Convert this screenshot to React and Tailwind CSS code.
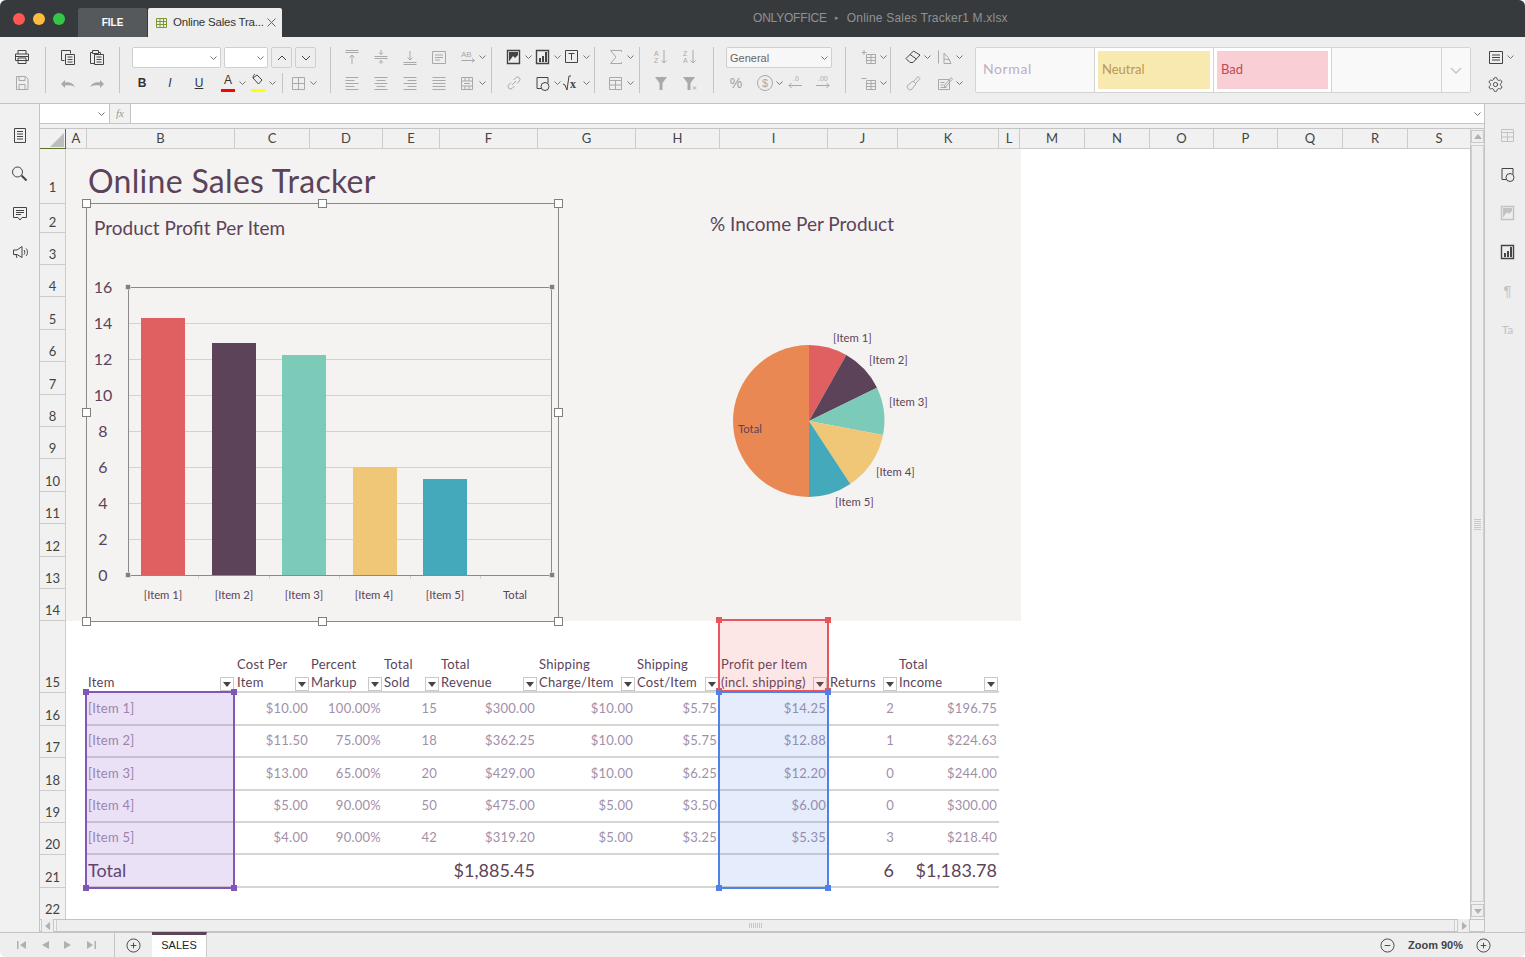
import React from 'react';
import { Settings } from 'lucide-react';
import clsx from 'clsx';

const PLUM = '#5c4359';

// toolbar icon outlines, 20x20
const ICONS = {
  print: 'M6 7V3.5h8V7M3.5 7h13v6.5h-13zM6 11h8v5.5H6zM3.5 9.5h13',
  save: 'M4.5 3.5h9l2.5 2.5v10.5h-11.5zM7 3.5v4h6v-4M7 16.5v-5h6v5',
  copy: 'M3.5 3.5h9v3M3.5 3.5v10h3M7.5 7.5h9v10h-9zM9.5 10h5M9.5 12.5h5M9.5 15h5',
  paste: 'M5 5.5H3.5v11h4M5.5 3.5h6v3h-6zM12 5.5h1.5v2M7.5 7.5h9v10h-9zM9.5 10h5M9.5 12.5h5M9.5 15h5',
  borders: 'M3.5 4.5h12v12h-12zM9.5 4.5v12M3.5 10.5h12',
  alignTop: 'M3.5 3.5h13M3.5 5.5h13M10 17V8M7.5 10.5L10 8l2.5 2.5',
  alignMid: 'M3.5 9.5h13M3.5 11.5h13M10 3v4.5M8 5.5l2 2 2-2M10 17v-3.5M8 15.5l2-2 2 2',
  alignBottom: 'M3.5 15.5h13M3.5 17.5h13M10 4v9M7.5 10.5L10 13l2.5-2.5',
  wrap: 'M3.5 4.5h13v12h-13zM6 8h8M6 10.5h8M6 13h5',
  left: 'M3.5 4.5h13M3.5 7.5h9M3.5 10.5h13M3.5 13.5h9M3.5 16.5h13',
  center: 'M3.5 4.5h13M5.5 7.5h9M3.5 10.5h13M5.5 13.5h9M3.5 16.5h13',
  right: 'M3.5 4.5h13M7.5 7.5h9M3.5 10.5h13M7.5 13.5h9M3.5 16.5h13',
  justify: 'M3.5 4.5h13M3.5 7.5h13M3.5 10.5h13M3.5 13.5h13M3.5 16.5h13',
  merge: 'M3.5 4.5h11v12h-11zM3.5 8h11M3.5 13h11M7 4.5V8M11 4.5V8M7 13v3.5M11 13v3.5M6 10.5h6',
  chart: 'M3.5 3.5h12v13h-12z',
  textBox: 'M3.5 3.5h12v12h-12zM6.5 6.5h6M9.5 6.5v6.5',
  link: 'M8 12l4-4M7 9.5l-2.5 2.5a2.5 2.5 0 003.5 3.5l2.5-2.5M13 10.5l2.5-2.5a2.5 2.5 0 00-3.5-3.5L9.5 7',
  shape: 'M8 15.5H4V4.5h11v5.5',
  sigma: 'M15.5 5V3.5h-11l5.5 6.5-5.5 6.5h11V15',
  table: 'M3.5 4.5h12v12h-12zM3.5 7.5h12M3.5 12h12M9.5 7.5v9',
  insert: 'M7.5 7.5h9v9h-9zM7.5 10.5h9M7.5 13.5h9M12 7.5v9M5 3v5M2.5 5.5h5',
  remove: 'M7.5 7.5h9v9h-9zM7.5 10.5h9M7.5 13.5h9M12 7.5v9M2.5 5.5h5',
  eraser: 'M3 11.5l7.5-7.5 6.5 4-7 7.5H7zM7 7.5l6.5 4.5',
  slices: 'M3.5 3.5v13M9 16.5V6l4 4.5 3 6zM9 12l6 1',
  brush: 'M4 13l6-5 3 3-5 6c-2 .5-4-2-4-4zM11 8l4-4.5 2 2-4 4.5',
  edit: 'M3.5 6.5h11v10h-11zM5.5 9.5h4M5.5 12h3M5.5 14.5h6M9 13l7-8.5 1.5 1.5-7 8z',
  list: 'M3.5 4.5h13v12h-13zM6 8h8M6 10.5h8M6 13h8',
  doc: 'M4.5 3.5h11v14h-11zM7 6.5h6M7 9h6M7 11.5h6M7 14h6',
  search: 'M12.5 8a5 5 0 11-10 0 5 5 0 0110 0z',
  comment: 'M3.5 4.5h13v10h-4.5L10 17l-2-2.5H3.5zM6 7.5h8M6 9.5h8M6 11.5h5',
  speaker: 'M3.5 8h3.5l5-3.5v11L7 12.5H3.5zM6 12.5l1 3.5M14 8c1 1 1 3.5 0 4.5M16 6.5c2 2 2 5.5 0 7.5',
};

function Ico({ name, className, sw = 1, children }) {
  return (
    <svg viewBox="0 0 20 20" width="20" height="20" fill="none" stroke="currentColor" strokeWidth={sw} className={clsx('shrink-0', className)}>
      {name && <path d={ICONS[name]} />}
      {children}
    </svg>
  );
}

function Chev({ className }) {
  return (
    <svg viewBox="0 0 7 4" width="7" height="4" fill="none" stroke="#777" strokeWidth="1" className={clsx('shrink-0', className)}>
      <path d="M.5.5L3.5 3.5 6.5.5" />
    </svg>
  );
}

// one toolbar slot: 20px icon plus an optional drop caret
function Tool({ name, off, chev, className, children }) {
  return (
    <span className={clsx('flex h-5 items-center', chev !== undefined && 'w-[28px]', off ? 'text-[#a9a9a9]' : 'text-[#444]', className)}>
      {children || <Ico name={name} />}
      {chev && <Chev className="ml-px" />}
    </span>
  );
}

function Combo({ className, label }) {
  return (
    <div className={clsx('flex h-[21px] items-center justify-between rounded-[2px] border border-[#cfcfcf] px-[3px] text-[11px] text-[#666]', className)}>
      <span className="pt-px">{label}</span>
      <Chev />
    </div>
  );
}

function ArrowBtn({ d }) {
  return (
    <div className="flex h-[21px] w-[21px] items-center justify-center rounded-[2px] border border-[#cfcfcf]">
      <svg viewBox="0 0 10 6" width="10" height="6" fill="none" stroke="#444" strokeWidth="1"><path d={d} /></svg>
    </div>
  );
}

function Group({ className, top, bottom }) {
  return (
    <div className={clsx('flex h-[46px] shrink-0 flex-col justify-between', className)}>
      {top}
      {bottom}
    </div>
  );
}

function Row({ className, children }) {
  return <div className={clsx('flex items-center', className)}>{children}</div>;
}

function Toolbar() {
  const small = { fontFamily: 'Liberation Sans', stroke: 'none', fill: 'currentColor' };
  return (
    <div className="flex h-[67px] shrink-0 border-b border-[#c4c4c4] bg-[#eeeeee] pt-[10px]">
      <Group
        className="w-[46px] border-r border-[#c4c4c4]"
        top={<Row className="pl-[12px]"><Tool name="print" /></Row>}
        bottom={<Row className="pl-[12px]"><Tool name="save" off /></Row>}
      />
      <Group
        className="w-[74px] border-r border-[#c4c4c4]"
        top={<Row className="gap-[9px] pl-[12px]"><Tool name="copy" /><Tool name="paste" /></Row>}
        bottom={
          <Row className="gap-[9px] pl-[12px]">
            <Tool off><Ico sw={0}><path fill="currentColor" d="M3 11l4-4v2.5c4.5-1 8 .5 10 4.5-2.5-1.5-5.5-2-10-1.5V15z" /></Ico></Tool>
            <Tool off><Ico sw={0}><path fill="currentColor" d="M17 11l-4-4v2.5c-4.5-1-8 .5-10 4.5 2.5-1.5 5.5-2 10-1.5V15z" /></Ico></Tool>
          </Row>
        }
      />
      <Group
        className="w-[211px] border-r border-[#c4c4c4]"
        top={
          <Row className="gap-[3px] pl-[12px]">
            <Combo className="w-[89px] justify-end bg-white" />
            <Combo className="w-[44px] justify-end bg-white" />
            <ArrowBtn d="M1 5l4-4 4 4" />
            <ArrowBtn d="M1 1l4 4 4-4" />
          </Row>
        }
        bottom={
          <Row className="pl-[12px] text-[12px] text-[#333]">
            <span className="w-5 text-center font-bold">B</span>
            <span className="ml-[8px] w-5 text-center italic">I</span>
            <span className="ml-[9px] w-5 text-center underline">U</span>
            <Tool chev className="ml-[9px]">
              <span className="flex h-5 w-5 flex-col items-center text-[12px] leading-[15px] text-[#333]">
                A<span className="mt-[1px] h-[3px] w-[14px] bg-[#ff0000]" />
              </span>
            </Tool>
            <Tool chev className="ml-[2px]">
              <span className="flex h-5 w-5 flex-col items-center">
                <svg viewBox="0 0 14 14" width="14" height="14" fill="none" stroke="#444"><path d="M2 5l4-3 5 5-3.5 4zM2 5c0-2 1-3.5 2-4" /></svg>
                <span className="mt-[2px] h-[3px] w-[14px] bg-[#ffff00]" />
              </span>
            </Tool>
            <span className="ml-[6px] h-5 border-l border-[#c4c4c4]" />
            <Tool name="borders" off chev className="ml-[6px]" />
          </Row>
        }
      />
      <Group
        className="w-[161px] border-r border-[#c4c4c4]"
        top={
          <Row className="gap-[9px] pl-[11px]">
            <Tool name="alignTop" off />
            <Tool name="alignMid" off />
            <Tool name="alignBottom" off />
            <Tool name="wrap" off />
            <Tool off chev>
              <Ico>
                <text x="3" y="10" fontSize="8" style={small}>AB</text>
                <path d="M3.5 13.5h13M14 11.5l2.5 2-2.5 2" />
              </Ico>
            </Tool>
          </Row>
        }
        bottom={
          <Row className="gap-[9px] pl-[11px]">
            <Tool name="left" off />
            <Tool name="center" off />
            <Tool name="right" off />
            <Tool name="justify" off />
            <Tool name="merge" off chev />
          </Row>
        }
      />
      <Group
        className="w-[103px] border-r border-[#c4c4c4]"
        top={
          <Row className="gap-px pl-[12px]">
            <Tool chev>
              <Ico name="chart" sw={1.4}><path fill="currentColor" stroke="none" d="M5 14.5V5h9v3l-3 3-2-2z" /></Ico>
            </Tool>
            <Tool chev>
              <Ico name="chart" sw={1.4}><path fill="currentColor" stroke="none" d="M6 11h2v4H6zM9 9h2v6H9zM12 5h2v10h-2z" /></Ico>
            </Tool>
            <Tool name="textBox" chev />
          </Row>
        }
        bottom={
          <Row className="gap-px pl-[12px]">
            <Tool name="link" off chev={false} />
            <Tool chev>
              <Ico name="shape"><circle cx="12" cy="13.5" r="4" /></Ico>
            </Tool>
            <Tool chev>
              <Ico>
                <path d="M1 11l2 1 2 5 2-14h2" />
                <text x="8" y="15" fontSize="12" fontWeight="bold" style={{ ...small, fontFamily: 'Liberation Serif' }}>x</text>
              </Ico>
            </Tool>
          </Row>
        }
      />
      <Group
        className="w-[45px] border-r border-[#c4c4c4]"
        top={<Row className="pl-[11px]"><Tool name="sigma" off chev /></Row>}
        bottom={<Row className="pl-[11px]"><Tool name="table" off chev /></Row>}
      />
      <Group
        className="w-[74px] border-r border-[#c4c4c4]"
        top={
          <Row className="gap-[9px] pl-[11px]">
            <Tool off>
              <Ico>
                <text x="3" y="9" fontSize="7" style={small}>A</text>
                <text x="3" y="16" fontSize="7" style={small}>Z</text>
                <path d="M13 3v13M10.5 13.5L13 16l2.5-2.5" />
              </Ico>
            </Tool>
            <Tool off>
              <Ico>
                <text x="3" y="9" fontSize="7" style={small}>Z</text>
                <text x="3" y="16" fontSize="7" style={small}>A</text>
                <path d="M13 3v13M10.5 13.5L13 16l2.5-2.5" />
              </Ico>
            </Tool>
          </Row>
        }
        bottom={
          <Row className="gap-[9px] pl-[11px]">
            <Tool off><Ico sw={0}><path fill="currentColor" d="M4 4h12l-4.5 6v7h-3v-7z" /></Ico></Tool>
            <Tool off>
              <Ico sw={0}>
                <path fill="currentColor" d="M3 4h12l-4.5 6v7h-3v-7z" />
                <path stroke="currentColor" strokeWidth="1" d="M13 13.5l3 3M16 13.5l-3 3" />
              </Ico>
            </Tool>
          </Row>
        }
      />
      <Group
        className="w-[132px] border-r border-[#c4c4c4]"
        top={<Row className="pl-[12px]"><Combo className="w-[106px] bg-[#f7f7f7]" label="General" /></Row>}
        bottom={
          <Row className="pl-[12px] text-[#a0a0a0]">
            <span className="w-5 text-center text-[14px] leading-5">%</span>
            <Tool off chev className="ml-[9px]">
              <Ico>
                <circle cx="10" cy="10" r="7.5" />
                <text x="10" y="14" fontSize="11" textAnchor="middle" style={small}>$</text>
              </Ico>
            </Tool>
            <Tool off className="ml-[2px]">
              <Ico>
                <text x="8" y="8" fontSize="7" style={small}>.0</text>
                <path d="M17 12.5H4M6.5 10L4 12.5 6.5 15" />
              </Ico>
            </Tool>
            <Tool off className="ml-[8px]">
              <Ico>
                <text x="5" y="8" fontSize="7" style={small}>.00</text>
                <path d="M3 12.5h13M13.5 10l2.5 2.5-2.5 2.5" />
              </Ico>
            </Tool>
          </Row>
        }
      />
      <Group
        className="w-[45px] border-r border-[#c4c4c4]"
        top={<Row className="pl-[13px]"><Tool name="insert" off chev /></Row>}
        bottom={<Row className="pl-[13px]"><Tool name="remove" off chev /></Row>}
      />
      <Group
        className="w-[84px]"
        top={<Row className="gap-[4px] pl-[12px]"><Tool name="eraser" chev /><Tool name="slices" off chev /></Row>}
        bottom={<Row className="gap-[4px] pl-[12px]"><Tool name="brush" off chev={false} /><Tool name="edit" off chev /></Row>}
      />
      <div className="flex h-[46px] w-[496px] shrink-0 rounded-[2px] border border-[#d4d4d4] bg-[#f9f9f9] font-['Lato',sans-serif] text-[13px]">
        <div className="flex w-[119px] items-center border-r border-[#d4d4d4] pb-[3px] pl-[7px] text-[14px] tracking-[0.6px] text-[#bcaec6]">Normal</div>
        <div className="flex w-[119px] items-center border-r border-[#d4d4d4] bg-white px-[3px] py-[3px]">
          <div className="flex h-full w-full items-center bg-[#f8e9b0] pl-[4px] text-[#bd9650]">Neutral</div>
        </div>
        <div className="flex w-[118px] items-center border-r border-[#d4d4d4] bg-white px-[3px] py-[3px]">
          <div className="flex h-full w-full items-center bg-[#f9ced4] pl-[4px] text-[#bf4a55]">Bad</div>
        </div>
        <div className="w-[110px] border-r border-[#d4d4d4]" />
        <div className="flex flex-1 items-center justify-center">
          <svg viewBox="0 0 12 7" width="12" height="7" fill="none" stroke="#c8c8c8" strokeWidth="1.5"><path d="M1 1l5 5 5-5" /></svg>
        </div>
      </div>
      <Group
        className="w-[54px]"
        top={<Row className="pl-[15px]"><Tool name="list" chev /></Row>}
        bottom={<Row className="pl-[16px] text-[#444]"><Settings size={17} strokeWidth={1.3} /></Row>}
      />
    </div>
  );
}

function FormulaBar() {
  return (
    <div className="flex h-[20px] shrink-0 border-b border-[#c4c4c4] bg-white">
      <div className="flex w-[70px] items-center justify-end border-r border-[#c4c4c4] pr-[4px]"><Chev /></div>
      <div className="flex w-[21px] items-center justify-center border-r border-[#c4c4c4] bg-[#f1f1f1] font-['Liberation_Serif',serif] text-[11px] italic text-[#999]">fx</div>
      <div className="flex flex-1 items-center justify-end pr-[3px]"><Chev /></div>
    </div>
  );
}

const COLS = [
  ['A', 'w-[21px]'], ['B', 'w-[148px]'], ['C', 'w-[75px]'], ['D', 'w-[73px]'], ['E', 'w-[57px]'],
  ['F', 'w-[98px]'], ['G', 'w-[98px]'], ['H', 'w-[84px]'], ['I', 'w-[108px]'], ['J', 'w-[70px]'],
  ['K', 'w-[101px]'], ['L', 'w-[21px]'], ['M', 'w-[65px]'], ['N', 'w-[65px]'], ['O', 'w-[64px]'],
  ['P', 'w-[64px]'], ['Q', 'w-[65px]'], ['R', 'w-[65px]'], ['S', 'w-[63px]'],
];

function ColumnHeaders() {
  return (
    <div className="flex h-[21px] shrink-0 border-t border-[#c4c4c4] bg-[#f1f1f1] font-['Lato',sans-serif] text-[13px] text-[#444]">
      <div className="flex w-[26px] items-end justify-end border-b border-r border-b-[#5a7328] border-r-[#5a7328] pb-[1px] pr-[1px]">
        <svg viewBox="0 0 14 14" width="14" height="14"><path d="M14 0v14H0z" fill="#bdbdbd" /></svg>
      </div>
      {COLS.map(([c, w]) => (
        <div key={c} className={clsx('flex items-center justify-center border-b border-r border-[#cccccc]', w)}>{c}</div>
      ))}
      <div className="flex flex-1 items-start pt-[1px]">
        <ScrollBtn d="M0 6h8L4 1z" />
      </div>
    </div>
  );
}

const ROWS = [
  ['1', 'h-[55px] pb-[7px]'], ['2', 'h-[29px] pb-px'], ['3', 'h-[32px] pb-px'], ['4', 'h-[32px] pb-px'], ['5', 'h-[33px] pb-px'],
  ['6', 'h-[32px] pb-px'], ['7', 'h-[33px] pb-px'], ['8', 'h-[32px] pb-px'], ['9', 'h-[32px] pb-px'], ['10', 'h-[33px] pb-px'],
  ['11', 'h-[32px] pb-px'], ['12', 'h-[33px] pb-px'], ['13', 'h-[32px] pb-px'], ['14', 'h-[32px] pb-px'], ['15', 'h-[72px] pb-px'],
  ['16', 'h-[33px] pb-px'], ['17', 'h-[32px] pb-px'], ['18', 'h-[33px] pb-px'], ['19', 'h-[32px] pb-px'], ['20', 'h-[32px] pb-px'],
  ['21', 'h-[33px] pb-px'], ['22', 'h-[32px] pb-px'],
];

function RowHeaders() {
  return (
    <div className="w-[26px] shrink-0 overflow-hidden border-r border-[#cccccc] bg-[#f1f1f1] font-['Lato',sans-serif] text-[13px] text-[#444]">
      {ROWS.map(([n, h]) => (
        <div key={n} className={clsx('flex items-end justify-center border-b border-[#cccccc] leading-[18px]', h)}>{n}</div>
      ))}
    </div>
  );
}

const BARS = [
  ['[Item 1]', 141, 318, '#e05f61', 163],
  ['[Item 2]', 212, 343, PLUM, 234],
  ['[Item 3]', 282, 355, '#7bcbb8', 304],
  ['[Item 4]', 353, 467, '#f0c777', 374],
  ['[Item 5]', 423, 479, '#44a9ba', 445],
];

function Handle({ x, y }) {
  return <rect x={x - 4} y={y - 4} width="8" height="8" fill="#fff" stroke="#7f7f7f" />;
}

function Dot({ x, y }) {
  return <rect x={x - 2.5} y={y - 2.5} width="5" height="5" fill="#7f7f7f" stroke="#fff" strokeWidth="0.5" />;
}

// page coordinates via viewBox, so numbers read off the screenshot directly
function BarChart() {
  const ticks = [16, 14, 12, 10, 8, 6, 4, 2, 0];
  return (
    <svg viewBox="80 197 486 430" width="486" height="430" className="absolute left-[14px] top-[48px] font-['Lato',sans-serif]">
      <rect x="86.5" y="203.5" width="472" height="418" fill="none" stroke="#8a8a8a" />
      <text x="94" y="235" fontSize="19" fill={PLUM}>Product Profit Per Item</text>
      {ticks.map((t) => {
        const y = 575 - t * 18;
        return (
          <g key={t}>
            <line x1="128" x2="552" y1={y + 0.5} y2={y + 0.5} stroke="#d3d2ce" />
            <text x="103" y={y + 6} fontSize="16" textAnchor="middle" fill={PLUM}>{t}</text>
          </g>
        );
      })}
      {BARS.map(([label, x, top, fill, cx]) => (
        <g key={label}>
          <rect x={x} y={top} width="44" height={575 - top} fill={fill} />
          <text x={cx} y="599" fontSize="11.3" textAnchor="middle" fill={PLUM}>{label}</text>
        </g>
      ))}
      <text x="515" y="599" fontSize="11.3" textAnchor="middle" fill={PLUM}>Total</text>
      {[198, 269, 339, 410, 480].map((x) => (
        <line key={x} x1={x + 0.5} x2={x + 0.5} y1="575" y2="579" stroke="#d3d2ce" />
      ))}
      <rect x="128.5" y="287.5" width="423" height="288" fill="none" stroke="#8a8a8a" />
      <Dot x={128} y={287} /><Dot x={552} y={287} /><Dot x={128} y={575} /><Dot x={552} y={575} />
      <Handle x={86.5} y={203.5} /><Handle x={322.5} y={203.5} /><Handle x={558.5} y={203.5} />
      <Handle x={86.5} y={412.5} /><Handle x={558.5} y={412.5} />
      <Handle x={86.5} y={621.5} /><Handle x={322.5} y={621.5} /><Handle x={558.5} y={621.5} />
    </svg>
  );
}

const SLICES = [
  ['M809 421L809 345A76 76 0 0 1 846.3 355Z', '#e05f61'],
  ['M809 421L846.3 355A76 76 0 0 1 877 387.7Z', PLUM],
  ['M809 421L877 387.7A76 76 0 0 1 883 435Z', '#7bcbb8'],
  ['M809 421L883 435A76 76 0 0 1 850.3 484Z', '#f0c777'],
  ['M809 421L850.3 484A76 76 0 0 1 809 497Z', '#44a9ba'],
  ['M809 421L809 497A76 76 0 0 1 809 345Z', '#ea8853'],
];

const PIE_LABELS = [
  ['[Item 1]', 833, 342], ['[Item 2]', 869, 364], ['[Item 3]', 889, 406],
  ['[Item 4]', 876, 476], ['[Item 5]', 835, 506], ['Total', 738, 433],
];

function PieChart() {
  return (
    <svg viewBox="690 205 250 310" width="250" height="310" className="absolute left-[624px] top-[56px] font-['Lato',sans-serif]">
      <text x="802" y="231" fontSize="19" textAnchor="middle" fill={PLUM}>% Income Per Product</text>
      {SLICES.map(([d, fill]) => <path key={fill} d={d} fill={fill} />)}
      {PIE_LABELS.map(([t, x, y]) => <text key={t} x={x} y={y} fontSize="11.3" fill={PLUM}>{t}</text>)}
    </svg>
  );
}

const TABLE_COLS = 'grid grid-cols-[148px_75px_73px_57px_98px_98px_84px_108px_70px_101px]';

const HEADERS = [
  [null, 'Item', 'pl-px'],
  ['Cost Per', 'Item', 'pl-[2px]'],
  ['Percent', 'Markup', 'pl-px'],
  ['Total', 'Sold', 'pl-px'],
  ['Total', 'Revenue', 'pl-px'],
  ['Shipping', 'Charge/Item', 'pl-px'],
  ['Shipping', 'Cost/Item', 'pl-px'],
  ['Profit per Item', '(incl. shipping)', 'pl-px'],
  [null, 'Returns', 'pl-[2px]'],
  ['Total', 'Income', 'pl-px'],
];

const DATA = [
  ['[Item 1]', '$10.00', '100.00%', '15', '$300.00', '$10.00', '$5.75', '$14.25', '2', '$196.75'],
  ['[Item 2]', '$11.50', '75.00%', '18', '$362.25', '$10.00', '$5.75', '$12.88', '1', '$224.63'],
  ['[Item 3]', '$13.00', '65.00%', '20', '$429.00', '$10.00', '$6.25', '$12.20', '0', '$244.00'],
  ['[Item 4]', '$5.00', '90.00%', '50', '$475.00', '$5.00', '$3.50', '$6.00', '0', '$300.00'],
  ['[Item 5]', '$4.00', '90.00%', '42', '$319.20', '$5.00', '$3.25', '$5.35', '3', '$218.40'],
];

const ROW_H = ['h-[33px]', 'h-[32px]', 'h-[33px]', 'h-[32px]', 'h-[32px]'];
const CELL_PAD = ['', 'pr-[2px]', 'pr-[2px]', 'pr-[3px]', 'pr-[3px]', 'pr-[3px]', 'pr-[3px]', 'pr-[2px]', 'pr-[4px]', 'pr-[2px]'];

function FilterBtn() {
  return (
    <span className="mr-px flex h-[14px] w-[14px] shrink-0 items-center justify-center border border-[#c9c9c9] bg-white">
      <svg viewBox="0 0 8 5" width="8" height="5"><path d="M0 0h8L4 5z" fill="#444" /></svg>
    </span>
  );
}

function SalesTable() {
  return (
    <div className="w-[912px] font-['Lato',sans-serif] tracking-[0.25px]">
      <div className={clsx(TABLE_COLS, 'h-[72px] border-b-2 border-[#d6d5cf] text-[13px] leading-[18px] text-[#5c4359]')}>
        {HEADERS.map(([a, b, pad]) => (
          <div key={b} className="flex items-end justify-between">
            <div className={clsx('whitespace-nowrap', pad)}>
              {a && <div>{a}</div>}
              <div>{b}</div>
            </div>
            <FilterBtn />
          </div>
        ))}
      </div>
      {DATA.map((row, r) => (
        <div key={row[0]} className={clsx(TABLE_COLS, ROW_H[r], 'items-center border-b-2 border-[#d6d5cf] text-[13px] text-[#a18fa8]')}>
          {row.map((v, i) => (
            <div key={i} className={clsx(i === 0 ? 'pl-px text-left' : 'text-right', CELL_PAD[i])}>{v}</div>
          ))}
        </div>
      ))}
      <div className={clsx(TABLE_COLS, 'h-[33px] items-center border-b-2 border-[#d6d5cf] text-[18px] tracking-normal text-[#5c4359]')}>
        <div className="pl-px">Total</div>
        <div />
        <div />
        <div />
        <div className="pr-[3px] text-right">$1,885.45</div>
        <div />
        <div />
        <div />
        <div className="pr-[4px] text-right">6</div>
        <div className="pr-[2px] text-right">$1,183.78</div>
      </div>
    </div>
  );
}

function Selection({ className, color }) {
  const dot = clsx('absolute h-[6px] w-[6px]', color);
  return (
    <div className={clsx('absolute border-2', className)}>
      <span className={clsx(dot, '-left-[4px] -top-[4px]')} />
      <span className={clsx(dot, '-right-[4px] -top-[4px]')} />
      <span className={clsx(dot, '-bottom-[4px] -left-[4px]')} />
      <span className={clsx(dot, '-bottom-[4px] -right-[4px]')} />
    </div>
  );
}

function Sheet() {
  return (
    <div className="relative flex-1 overflow-hidden bg-white">
      <div className="h-[472px] w-[955px] bg-[#f4f3f2] pl-[22px]">
        <h1 className="flex h-[52px] items-end font-['Lato',sans-serif] text-[32px] leading-[40px] tracking-[0.3px] text-[#5c4359]">Online Sales Tracker</h1>
      </div>
      <div className="pl-[21px]">
        <SalesTable />
      </div>
      <BarChart />
      <PieChart />
      <Selection className="left-[652px] top-[470px] h-[73px] w-[111px] border-[#e8555a] bg-[#e8555a]/15" color="bg-[#e8555a]" />
      <Selection className="left-[652px] top-[542px] h-[198px] w-[111px] border-[#4f81e6] bg-[#4f81e6]/15" color="bg-[#4f81e6]" />
      <Selection className="left-[19px] top-[542px] h-[198px] w-[150px] border-[#7e57b8] bg-[#8050d0]/17" color="bg-[#7e57b8]" />
    </div>
  );
}

function ScrollBtn({ d, className }) {
  return (
    <div className={clsx('flex h-[13px] w-[13px] shrink-0 items-center justify-center border border-[#c9c9c9] bg-[#eeeeee]', className)}>
      <svg viewBox="0 0 8 8" width="8" height="8"><path d={d} fill="#b0b0b0" /></svg>
    </div>
  );
}

function VScroll() {
  return (
    <div className="relative z-10 -mt-[4px] flex w-[14px] shrink-0 flex-col gap-[2px] border-l border-[#c4c4c4] bg-[#f1f1f1] pb-[2px]">
      <div className="flex flex-1 items-center justify-center border border-[#cfcfcf] bg-[#eeeeee]">
        <div className="h-[12px] w-[7px] bg-[repeating-linear-gradient(0deg,#c8c8c8_0,#c8c8c8_1px,transparent_1px,transparent_2px)]" />
      </div>
      <ScrollBtn d="M0 2h8L4 7z" />
    </div>
  );
}

function RightRail() {
  const icons = [
    ['table', true], ['shape', false], ['image', true], ['bars', false], ['para', true], ['art', true],
  ];
  return (
    <div className="flex w-[41px] shrink-0 flex-col items-center gap-[19px] border-l border-[#c4c4c4] bg-[#eeeeee] pl-[5px] pt-[21px]">
      {icons.map(([k, off]) => (
        <span key={k} className={off ? 'text-[#c2c2c2]' : 'text-[#444]'}>
          {k === 'table' && <Ico name="table" />}
          {k === 'shape' && <Ico name="shape"><circle cx="12" cy="13.5" r="4" fill="#eee" /></Ico>}
          {k === 'image' && <Ico name="chart" sw={1.4}><path fill="currentColor" stroke="none" d="M5 14.5V5h9v3l-3 3-2-2z" /></Ico>}
          {k === 'bars' && <Ico name="chart" sw={1.4}><path fill="currentColor" stroke="none" d="M6 11h2v4H6zM9 9h2v6H9zM12 5h2v10h-2z" /></Ico>}
          {k === 'para' && <div className="h-5 w-5 text-center text-[15px] leading-5">¶</div>}
          {k === 'art' && <div className="h-5 w-5 text-center font-['Lato',sans-serif] text-[12px] leading-5">Ta</div>}
        </span>
      ))}
    </div>
  );
}

function LeftRail() {
  return (
    <div className="flex w-[40px] shrink-0 flex-col items-center gap-[19px] border-r border-[#c4c4c4] bg-[#f1f1f1] pt-[21px] text-[#444]">
      <Ico name="doc" />
      <Ico name="search"><path d="M11.5 11.5l5 5" strokeWidth="2" /></Ico>
      <Ico name="comment" />
      <Ico name="speaker" />
    </div>
  );
}

function Circle({ children }) {
  return (
    <svg viewBox="0 0 16 16" width="15" height="15" fill="none" stroke="#444" strokeWidth="1">
      <circle cx="8" cy="8" r="7" />
      {children}
    </svg>
  );
}

function NavArrow({ d }) {
  return <svg viewBox="0 0 10 10" width="10" height="10"><path d={d} fill="#b0b0b0" /></svg>;
}

function StatusBar() {
  return (
    <div className="flex h-[25px] shrink-0 items-stretch border-t border-[#c4c4c4] bg-[#eeeeee] text-[#444]">
      <div className="flex w-[115px] items-center gap-[13px] border-r border-[#c4c4c4] pl-[17px]">
        <NavArrow d="M0 1h1.5v8H0zM9 1v8L3 5z" />
        <NavArrow d="M9 1v8L2 5z" />
        <NavArrow d="M1 1v8l7-4z" />
        <NavArrow d="M10 1H8.5v8H10zM1 1v8l6-4z" />
      </div>
      <div className="flex w-[37px] items-center justify-center"><Circle><path d="M8 5v6M5 8h6" /></Circle></div>
      <div className="-mt-px flex w-[55px] items-center justify-center border-r border-t-[3px] border-[#cccccc] border-t-[#5c4359] bg-white pb-[2px] text-[11px] text-[#222]">SALES</div>
      <div className="ml-auto flex items-center pr-[34px]">
        <Circle><path d="M5 8h6" /></Circle>
        <span className="ml-[13px] text-[11px] font-bold">Zoom 90%</span>
        <span className="ml-[13px] flex"><Circle><path d="M8 5v6M5 8h6" /></Circle></span>
      </div>
    </div>
  );
}

function TitleBar() {
  return (
    <div className="flex h-[37px] shrink-0 items-end bg-[#373a3d]">
      <div className="flex h-[37px] w-[78px] items-center gap-[8px] pl-[13px]">
        <span className="h-3 w-3 rounded-full bg-[#fc5753]" />
        <span className="h-3 w-3 rounded-full bg-[#fdbc40]" />
        <span className="h-3 w-3 rounded-full bg-[#33c748]" />
      </div>
      <div className="flex h-[29px] w-[69px] items-center justify-center rounded-t-[2px] bg-[#55595c] text-[10px] font-bold text-white">FILE</div>
      <div className="ml-px flex h-[29px] w-[134px] items-center rounded-t-[2px] bg-[#eeeeee] pl-[8px] text-[11.5px] tracking-[-0.2px] text-[#333]">
        <svg viewBox="0 0 11 10" width="11" height="10" fill="none" stroke="#7a9a2e" strokeWidth="1"><path d="M.5.5h10v9H.5zM.5 3.5h10M.5 6.5h10M4 .5v9M7.5 .5v9" /></svg>
        <span className="ml-[6px] w-[94px] whitespace-nowrap">Online Sales Tra...</span>
        <svg viewBox="0 0 9 9" width="9" height="9" fill="none" stroke="#666" strokeWidth="1"><path d="M.5.5l8 8M8.5.5l-8 8" /></svg>
      </div>
      <div className="ml-[471px] flex h-[37px] items-center pb-px text-[12px] text-[#8f9294]">
        <span className="tracking-[-0.2px]">ONLYOFFICE</span>
        <span className="mx-[8px] text-[7px]">▸</span>
        <span className="tracking-[0.2px]">Online Sales Tracker1 M.xlsx</span>
      </div>
    </div>
  );
}

export default function App() {
  return (
    <div className="flex h-[957px] w-[1525px] flex-col overflow-hidden rounded-[6px] bg-[#eeeeee] font-['Liberation_Sans',sans-serif]">
      <TitleBar />
      <Toolbar />
      <div className="flex min-h-0 flex-1">
        <LeftRail />
        <div className="flex min-w-0 flex-1 flex-col">
          <FormulaBar />
          <div className="h-[4px] shrink-0 bg-[#f1f1f1]" />
          <ColumnHeaders />
          <div className="flex min-h-0 flex-1">
            <RowHeaders />
            <Sheet />
            <VScroll />
          </div>
          <div className="flex h-[13px] shrink-0 items-center gap-[2px] border-y border-[#c4c4c4] bg-[#f1f1f1] pl-px">
            <ScrollBtn d="M6 0v8L1 4z" className="h-[11px] border-y-0" />
            <div className="flex h-[11px] flex-1 items-center justify-center border-x border-[#cfcfcf] bg-[#eeeeee]">
              <div className="h-[5px] w-[13px] bg-[repeating-linear-gradient(90deg,#c8c8c8_0,#c8c8c8_1px,transparent_1px,transparent_2px)]" />
            </div>
            <ScrollBtn d="M2 0v8l5-4z" className="mr-[14px] h-[11px] border-y-0" />
          </div>
        </div>
        <RightRail />
      </div>
      <StatusBar />
    </div>
  );
}
